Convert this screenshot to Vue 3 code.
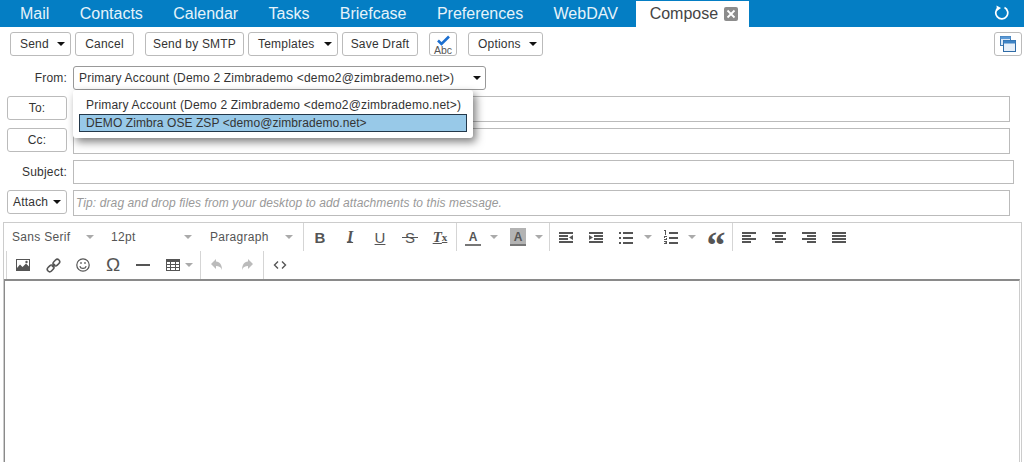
<script setup>
const tabs = ['Mail', 'Contacts', 'Calendar', 'Tasks', 'Briefcase', 'Preferences', 'WebDAV']
const fonts = [
  { label: 'Sans Serif', cls: 'f1' },
  { label: '12pt', cls: 'f2' },
  { label: 'Paragraph', cls: 'f3' }
]
const lines = {
  outdent: 'M0 2h14v2H0zM0 5h9v2H0zM0 8h9v2H0zM0 11h14v2H0zM14 5v5l-4-2.500z',
  indent: 'M0 2h14v2H0zM5 5h9v2H5zM5 8h9v2H5zM0 11h14v2H0zM0 5v5l4-2.500z',
  bullets: 'M0 2h2v2H0zM0 7h2v2H0zM0 12h2v2H0zM4 2h10v2H4zM4 7h10v2H4zM4 12h10v2H4z',
  numbers: 'M0 0h2v5H1V1H0zM0 6h3v1H1v1h2v2H0V9h2V8H0zM0 11h3v3H0v-1h2v-.5H1v-1h1V12H0zM5 2h9v2H5zM5 7h9v2H5zM5 12h9v2H5z',
  left: 'M0 2h14v2H0zM0 5h9v2H0zM0 8h14v2H0zM0 11h9v2H0z',
  center: 'M0 2h14v2H0zM3 5h8v2H3zM0 8h14v2H0zM3 11h8v2H3z',
  right: 'M0 2h14v2H0zM5 5h9v2H5zM0 8h14v2H0zM5 11h9v2H5z',
  justify: 'M0 2h14v2H0zM0 5h14v2H0zM0 8h14v2H0zM0 11h14v2H0z'
}
</script>

<template>
  <div class="app">
    <header class="topbar">
      <nav class="tabs">
        <span v-for="t in tabs" :key="t" class="tab">{{ t }}</span>
        <span class="tab active">Compose<span class="close"><svg width="12" height="12" viewBox="0 0 12 12"><path d="M2.500 2.500l7 7M9.500 2.500l-7 7" stroke="#fff" stroke-width="1.800" /></svg></span></span>
      </nav>
      <svg class="refresh" width="15" height="15" viewBox="0 0 15 15"><path d="M4.500 2.800A6 6 0 1 0 10.500 2.500" fill="none" stroke="#fff" stroke-width="1.700" /><path d="M2.500 0.500l.5 5.500 4-3z" fill="#fff" /></svg>
    </header>

    <div class="actions">
      <button class="btn w-send">Send<i class="caret" /></button>
      <button class="btn w-cancel">Cancel</button>
      <button class="btn w-smtp gap-l">Send by SMTP</button>
      <button class="btn w-tpl">Templates<i class="caret" /></button>
      <button class="btn w-draft">Save Draft</button>
      <button class="btn w-spell gap-l">
        <svg width="20" height="20" viewBox="0 0 20 20"><path d="M5 5.500l3.500 3.500L16 1.500" fill="none" stroke="#1c6fd0" stroke-width="2.600" /></svg>
        <span class="abc">Abc</span>
      </button>
      <button class="btn w-options gap-l">Options<i class="caret" /></button>
      <button class="btn w-win">
        <svg width="16" height="16" viewBox="0 0 16 16"><rect x=".5" y=".5" width="10" height="9" fill="#dce9f7" stroke="#3d7ab5" /><rect x=".5" y=".5" width="10" height="2.500" fill="#5c9ad6" /><rect x="3.500" y="4.500" width="12" height="11" fill="#e6eff9" stroke="#2f6ba6" /><rect x="3.500" y="4.500" width="12" height="3" fill="#3d83c6" /></svg>
      </button>
    </div>

    <div class="row from-row">
      <label class="lbl">From:</label>
      <div class="select">
        <span>Primary Account (Demo 2 Zimbrademo &lt;demo2@zimbrademo.net&gt;)</span><i class="caret" />
      </div>
      <ul class="menu">
        <li>Primary Account (Demo 2 Zimbrademo &lt;demo2@zimbrademo.net&gt;)</li>
        <li class="sel">DEMO Zimbra OSE ZSP &lt;demo@zimbrademo.net&gt;</li>
      </ul>
    </div>
    <div class="row to-row">
      <button class="btn addr">To:</button>
      <div class="input addr-input" />
    </div>
    <div class="row cc-row">
      <button class="btn addr">Cc:</button>
      <div class="input addr-input" />
    </div>
    <div class="row subject-row">
      <label class="lbl">Subject:</label>
      <div class="input subject" />
    </div>
    <div class="row attach-row">
      <button class="btn addr attach">Attach<i class="caret" /></button>
      <div class="input addr-input tip">Tip: drag and drop files from your desktop to add attachments to this message.</div>
    </div>

    <section class="editor">
      <div class="tb tb1">
        <div class="grp fonts">
          <span v-for="f in fonts" :key="f.label" class="font" :class="f.cls">{{ f.label }}<i class="ar" /></span>
        </div>
        <div class="grp fmt">
          <span class="ic tx b">B</span>
          <span class="ic tx it">I</span>
          <span class="ic tx un">U</span>
          <span class="ic tx st"><span>S</span></span>
          <span class="ic tx clr">T<sub>x</sub></span>
        </div>
        <div class="grp colors">
          <span class="ic color"><span class="a">A</span></span><i class="ar lone" />
          <span class="ic color bg"><span class="a">A</span></span><i class="ar lone" />
        </div>
        <div class="grp lists">
          <span class="ic"><svg width="14" height="14" viewBox="0 0 14 14"><path :d="lines.outdent" /></svg></span>
          <span class="ic"><svg width="14" height="14" viewBox="0 0 14 14"><path :d="lines.indent" /></svg></span>
          <span class="ic"><svg width="14" height="14" viewBox="0 0 14 14"><path :d="lines.bullets" /></svg></span><i class="ar lone l1" />
          <span class="ic"><svg width="14" height="14" viewBox="0 0 14 14"><path :d="lines.numbers" /></svg></span><i class="ar lone l2" />
          <span class="ic tx quote">“</span>
        </div>
        <div class="grp aligns">
          <span class="ic"><svg width="14" height="14" viewBox="0 0 14 14"><path :d="lines.left" /></svg></span>
          <span class="ic"><svg width="14" height="14" viewBox="0 0 14 14"><path :d="lines.center" /></svg></span>
          <span class="ic"><svg width="14" height="14" viewBox="0 0 14 14"><path :d="lines.right" /></svg></span>
          <span class="ic"><svg width="14" height="14" viewBox="0 0 14 14"><path :d="lines.justify" /></svg></span>
        </div>
      </div>
      <div class="tb tb2">
        <div class="grp ins">
          <span class="ic"><svg width="14" height="14" viewBox="0 0 14 14"><path fill-rule="evenodd" d="M0 1h14v12H0zM1 2v8l3-3.500 2.500 2.500L10 5.500l3 3V2z" /><circle cx="10.500" cy="4" r="1.200" /></svg></span>
          <span class="ic"><svg width="15" height="15" viewBox="0 0 15 15" fill="none" stroke="#555" stroke-width="1.600"><rect x="-3.600" y="-2.400" width="7.200" height="4.800" rx="2.400" transform="translate(10.400 4.600) rotate(-45)" /><rect x="-3.600" y="-2.400" width="7.200" height="4.800" rx="2.400" transform="translate(4.600 10.400) rotate(-45)" /><path d="M6 9l3-3" /></svg></span>
          <span class="ic"><svg width="14" height="14" viewBox="0 0 14 14" fill="none" stroke="#555" stroke-width="1.200"><circle cx="7" cy="7" r="6.200" /><path d="M3.800 8.200a3.400 3.400 0 0 0 6.400 0" /><path d="M5 4v2M9 4v2" /></svg></span>
          <span class="ic tx omega">Ω</span>
          <span class="ic"><svg width="14" height="14" viewBox="0 0 14 14"><path d="M0 6h14v2H0z" /></svg></span>
          <span class="ic"><svg width="14" height="12" viewBox="0 0 14 12"><path d="M0 0h14v12H0zM1 3v2h3V3zM5 3v2h4V3zM10 3v2h3V3zM1 6v2h3V6zM5 6v2h4V6zM10 6v2h3V6zM1 9v2h3V9zM5 9v2h4V9zM10 9v2h3V9z" fill-rule="evenodd" /></svg></span><i class="ar lone tight" />
        </div>
        <div class="grp hist">
          <span class="ic off"><svg width="14" height="14" viewBox="0 0 14 14"><path d="M6 1L1 6l5 5V8c3 0 5 1 6 4 0-5-2-8-6-8.500z" /></svg></span>
          <span class="ic off"><svg width="14" height="14" viewBox="0 0 14 14"><path d="M8 1l5 5-5 5V8c-3 0-5 1-6 4 0-5 2-8 6-8.500z" /></svg></span>
        </div>
        <div class="grp code">
          <span class="ic"><svg width="14" height="14" viewBox="0 0 14 14" fill="none" stroke="#555" stroke-width="1.400"><path d="M5 3.500L1.500 7 5 10.500M9 3.500L12.500 7 9 10.500" /></svg></span>
        </div>
      </div>
      <div class="body" />
    </section>
  </div>
</template>

<style scoped>
.app { width: 1024px; height: 462px; overflow: hidden; background: #fff; font: 12px "Liberation Sans", Arial, sans-serif; color: #333; letter-spacing: .2px; }
button { font: inherit; letter-spacing: inherit; color: inherit; background: #fff; padding: 0; }

.topbar { height: 27px; background: #047ec4; display: flex; justify-content: space-between; align-items: center; padding-right: 15px; }
.tabs { display: flex; height: 27px; padding-left: 4.800px; }
.tab { font: 16px "Liberation Sans", sans-serif; letter-spacing: 0; color: #e6f3fa; padding: 0 15.200px; line-height: 27px; }
.tab.active { margin-top: 1px; margin-left: 2.600px; background: #fff; color: #444; padding: 0 11px 0 14px; display: flex; align-items: center; gap: 6px; line-height: 26px; height: 26px; }
.close { width: 14px; height: 14px; background: #8c8c8c; border-radius: 2px; display: flex; align-items: center; justify-content: center; }
.refresh { margin-bottom: 2px; }

.btn { box-sizing: border-box; height: 24px; border: 1px solid #bbb; border-radius: 3px; display: flex; align-items: center; justify-content: center; }
.caret { display: inline-block; border: 4px solid transparent; border-top: 4px solid #111; border-bottom: 0; width: 0; height: 0; }
.actions { display: flex; gap: 4px; padding: 5px 2px 0 10px; height: 27px; }
.gap-l { margin-left: 7px; }
.w-send { width: 61px; justify-content: space-between; padding: 0 5px 0 9px; }
.w-cancel { width: 59px; }
.w-smtp { width: 99px; }
.w-tpl { width: 90px; justify-content: space-between; padding: 0 5px 0 9px; }
.w-draft { width: 76px; }
.w-spell { width: 28px; position: relative; }
.w-spell svg { position: absolute; top: 2px; left: 3px; }
.abc { position: absolute; left: 4px; top: 12px; font-size: 10.500px; letter-spacing: 0; line-height: 11px; color: #555; }
.w-options { width: 75px; justify-content: space-between; padding: 0 5px 0 9px; }
.w-win { width: 28px; margin-left: auto; }

.row { display: flex; position: relative; }
.lbl { width: 67px; text-align: right; flex: none; margin-right: 6px; line-height: 24px; }
.from-row { margin-top: 7px; height: 24px; }
.select { box-sizing: border-box; width: 413px; height: 24px; border: 1px solid #999; border-radius: 3px; display: flex; align-items: center; justify-content: space-between; padding: 0 4px 0 5px; }
.menu { position: absolute; left: 73px; top: 24px; width: 400px; height: 48px; margin: 0; padding: 3px 6px 0; box-sizing: border-box; list-style: none; background: #fff; border-radius: 3px; box-shadow: 3px 4px 9px rgba(0, 0, 0, .5); z-index: 5; }
.menu li { height: 18px; line-height: 16px; padding-left: 6px; border: 1px solid transparent; box-sizing: border-box; margin-top: 3px; white-space: nowrap; }
.menu li + li { margin-top: 0; }
.menu .sel { background: #98c9e8; border-color: #23384a; letter-spacing: .08px; }

.input { box-sizing: border-box; border: 1px solid #bbb; background: #fff; height: 26px; }
.to-row { margin-top: 6px; padding-left: 7px; gap: 6px; }
.cc-row { margin-top: 6px; padding-left: 7px; gap: 6px; }
.addr { width: 60px; }
.addr-input { width: 937px; }
.subject-row { margin-top: 6px; }
.subject { width: 941px; height: 24px; }
.attach-row { margin-top: 6px; padding-left: 7px; gap: 6px; }
.attach { justify-content: space-between; padding: 0 5px; }
.tip { font-style: italic; color: #999; line-height: 24px; padding-left: 2px; letter-spacing: .1px; }

.editor { box-sizing: border-box; margin: 6px 2px 0 3px; border: 1px solid #ccc; border-bottom: 0; height: 240px; display: flex; flex-direction: column; }
.tb { display: flex; align-items: flex-start; height: 28px; flex: none; }
.grp { display: flex; align-items: center; height: 28px; box-sizing: border-box; border-right: 1px solid #d5d5d5; flex: none; }
.tb2 .grp:last-child, .aligns { border-right: 0; }
.fonts { width: 300px; }
.font { display: flex; align-items: center; color: #555; letter-spacing: .3px; }
.font .ar { margin-left: auto; }
.f1 { width: 100px; padding-left: 8px; box-sizing: border-box; }
.f2 { width: 98px; padding-left: 7px; box-sizing: border-box; }
.f3 { width: 101px; padding-left: 8px; padding-right: 10px; box-sizing: border-box; }
.f1 .ar { margin-right: 10px; } .f2 .ar { margin-right: 10px; }
.ar { display: inline-block; width: 0; height: 0; border: 4px solid transparent; border-top: 4px solid #aaa; border-bottom: 0; flex: none; }
.ic { width: 30px; height: 28px; display: flex; align-items: center; justify-content: center; color: #555; fill: #555; flex: none; }
.tx { font: 700 14px "Liberation Sans", sans-serif; letter-spacing: 0; }
.fmt { width: 153px; padding-left: 1px; }
.b { font-size: 15px; }
.it { font: italic 700 16px "Liberation Serif", serif; text-decoration: underline; text-underline-offset: 0; }
.un { font-weight: 400; text-decoration: underline; font-size: 15px; }
.st { font-weight: 400; font-size: 15px; }
.st span { position: relative; display: block; }
.st span::after { content: ""; position: absolute; left: -3px; right: -3px; top: 8px; height: 1px; background: #555; }
.clr { font: italic 700 15px "Liberation Serif", serif; text-decoration: underline; }
.clr sub { font-size: 11px; line-height: 0; font-style: normal; }
.colors { width: 93px; }
.colors .ic { width: 32px; }
.color .a { box-sizing: border-box; width: 16px; height: 18px; display: flex; align-items: center; justify-content: center; font-size: 12px; font-weight: 700; letter-spacing: 0; padding-top: 2px; border-bottom: 2px solid #777; }
.bg .a { background: #b3b3b3; }
.ar.lone { margin: 0 4px 0 1px; }
.lists { width: 183px; padding-left: 1px; }
.ar.l1 { margin: 0 4px 0 3px; }
.ar.l2 { margin: 0 5px 0 2px; }
.quote { font: 700 38px/1 "Liberation Serif", serif; padding-top: 15px; box-sizing: border-box; }
.aligns { padding-left: 1px; }

.ins { width: 195px; border-left: 1px solid #d5d5d5; margin-left: 2px; padding-left: 1px; }
.ins .ar.tight { margin: 0 7px 0 -3px; }
.omega { font: 400 19px "Liberation Sans", sans-serif; }
.hist { width: 63px; padding-left: 1px; }
.code { padding-left: 1px; }
.off { color: #bbb; fill: #bbb; }
.body { flex: 1; border-top: 2px solid #8a8a8a; border-left: 1px solid #8a8a8a; border-right: 1px solid #ccc; margin-right: 1px; }
</style>
